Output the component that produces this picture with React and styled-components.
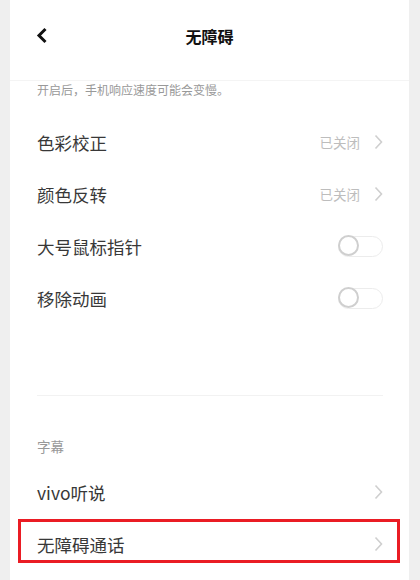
import React from 'react'
import styled, { createGlobalStyle } from 'styled-components'

const Global = createGlobalStyle`
  body {
    margin: 0;
    background: #efefef;
    font-family: "Noto Sans CJK SC", "Noto Sans", sans-serif;
  }
`

////////Styles///////////
const Panel = styled.div`
  margin: 0 11px 0 10px;
  height: 580px;
  background: #fff;
  display: flex;
  flex-direction: column;
  overflow: hidden;
`
const Header = styled.div`
  height: 80px;
  display: flex;
  align-items: center;
  justify-content: center;
  position: relative;
  border-bottom: 1px solid #f4f4f4;
`
const Back = styled.svg`
  position: absolute;
  left: 26px;
  top: 27px;
`
const Title = styled.div`
  font-size: 16px;
  font-weight: 700;
  color: #111;
  margin-top: -9px;
`
const Hint = styled.div`
  padding: 1px 27px 0;
  height: 34px;
  font-size: 12px;
  color: #999;
  line-height: 15px;
`
const Row = styled.div`
  height: 52px;
  display: flex;
  align-items: center;
  justify-content: space-between;
  padding: 0 26px 0 27px;
  position: relative;
`
const Label = styled.span`
  font-size: 17.5px;
  color: #383838;
`
const Right = styled.div`
  display: flex;
  align-items: center;
  gap: 14px;
`
const Value = styled.span`
  font-size: 13.5px;
  color: #bdbdbd;
`
const Toggle = styled.div`
  width: 45px;
  height: 21px;
  box-sizing: border-box;
  border: 1.5px solid #ececec;
  border-radius: 11px;
  position: relative;
  &::before {
    content: '';
    position: absolute;
    left: -1.5px;
    top: -1.5px;
    width: 21px;
    height: 21px;
    box-sizing: border-box;
    border: 2.5px solid #cfcfcf;
    border-radius: 50%;
    background: #fff;
  }
`
const Divider = styled.div`
  margin: 71px 26px 0 27px;
  border-top: 1px solid #f2f2f2;
`
const Section = styled.div`
  padding: 40px 27px 0;
  height: 30px;
  font-size: 13.5px;
  color: #999;
`
const Mark = styled.div`
  position: absolute;
  left: 8px;
  top: 1px;
  width: 382px;
  height: 44px;
  box-sizing: border-box;
  border: 3px solid #ea1c24;
  pointer-events: none;
`

const Chevron = () => (
  <svg width="9" height="16" viewBox="0 0 9 16">
    <path d="M1.5 1.5 L7.5 8 L1.5 14.5" fill="none" stroke="#cfcfcf" strokeWidth="1.6" />
  </svg>
)

const App = () => {
  const links = [
    { label: '色彩校正', value: '已关闭' },
    { label: '颜色反转', value: '已关闭' },
  ]
  const switches = ['大号鼠标指针', '移除动画']

  return (
    <>
      <Global />
      <Panel>
        <Header>
          <Back width="12" height="17" viewBox="0 0 12 17">
            <path d="M9.5 2 L3 8.5 L9.5 15" fill="none" stroke="#111" strokeWidth="3" />
          </Back>
          <Title>无障碍</Title>
        </Header>
        <Hint>开启后，手机响应速度可能会变慢。</Hint>
        {links.map(item => (
          <Row key={item.label}>
            <Label>{item.label}</Label>
            <Right>
              <Value>{item.value}</Value>
              <Chevron />
            </Right>
          </Row>
        ))}
        {switches.map(s => (
          <Row key={s}>
            <Label>{s}</Label>
            <Toggle />
          </Row>
        ))}
        <Divider />
        <Section>字幕</Section>
        <Row>
          <Label>vivo听说</Label>
          <Chevron />
        </Row>
        <Row>
          <Label>无障碍通话</Label>
          <Chevron />
          <Mark />
        </Row>
      </Panel>
    </>
  )
}

export default App
